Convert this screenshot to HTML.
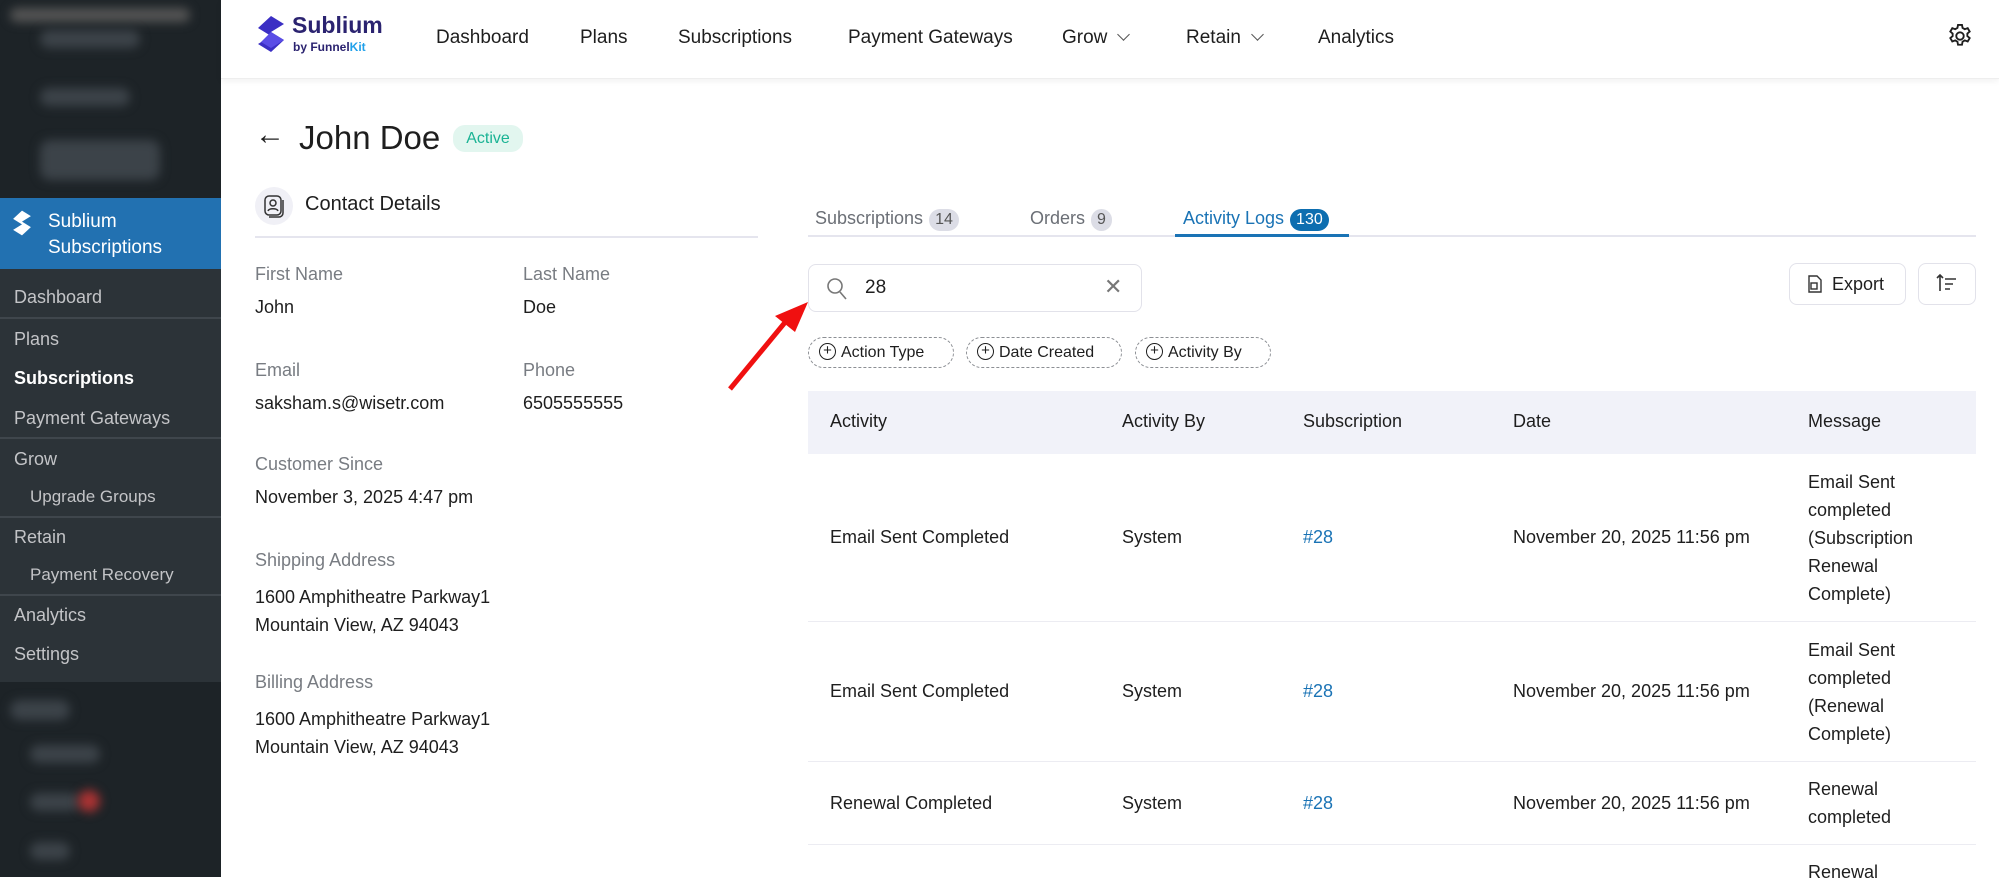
<!DOCTYPE html>
<html><head><meta charset="utf-8"><style>
*{margin:0;padding:0;box-sizing:border-box}
body{width:1999px;height:877px;overflow:hidden;background:#fff;font-family:"Liberation Sans",sans-serif;position:relative;color:#1e1e1e}
.a{position:absolute;white-space:nowrap}
#sb{position:absolute;left:0;top:0;width:221px;height:877px;background:#1d2327}
.blur{position:absolute;background:#3c4349;border-radius:10px;filter:blur(5px)}
.sm{position:absolute;left:14px;font-size:18px;color:#c3c4c7}
.sep{position:absolute;left:0;width:221px;height:2px;background:#3f464c}
.nav{position:absolute;top:27px;font-size:19px;color:#1e1e1e}
.chev{display:inline-block;width:9px;height:9px;border-right:1.5px solid #555;border-bottom:1.5px solid #555;transform:rotate(45deg);margin-left:12px;position:relative;top:-4px}
.lab{position:absolute;font-size:18px;color:#787c82}
.val{position:absolute;font-size:18px;color:#1e1e1e}
.th{position:absolute;top:411px;font-size:18px;color:#1e1e1e}
.td{position:absolute;font-size:18px;color:#1e1e1e}
.chip{position:absolute;top:337px;height:31px;border:1.5px dashed #8c8f94;border-radius:16px;font-size:16px;color:#1e1e1e;padding:6px 0 0 32px}
.chip:before{content:"+";position:absolute;left:10px;top:5px;width:15px;height:15px;border:1.5px solid #1e1e1e;border-radius:50%;font-size:15px;line-height:13px;text-align:center}
.badge{display:inline-block;border-radius:12px;padding:2px 6px;font-size:16px;margin-left:6px}
</style></head><body>
<div id="sb">
 <div class="blur" style="left:10px;top:8px;width:180px;height:14px;background:#555"></div>
 <div class="blur" style="left:40px;top:30px;width:100px;height:18px"></div>
 <div class="blur" style="left:40px;top:88px;width:90px;height:18px"></div>
 <div class="blur" style="left:40px;top:140px;width:120px;height:40px"></div>
 <div style="position:absolute;left:0;top:198px;width:221px;height:71px;background:#2271b1"></div>
 <svg class="a" style="left:12px;top:210px" width="20" height="26" viewBox="0 0 28 38"><path d="M14 1 L27 9 L14 17 L27 25 L14 37 L1 29 L14 21 L1 13 Z" fill="#fff"/></svg>
 <div class="a" style="left:48px;top:209px;color:#fff;font-size:19px;line-height:26px">Sublium<br>Subscriptions</div>
 <div style="position:absolute;left:0;top:269px;width:221px;height:413px;background:#2c3338"></div>
 <div class="sm" style="top:287px">Dashboard</div>
 <div class="sep" style="top:317px"></div>
 <div class="sm" style="top:329px">Plans</div>
 <div class="sm" style="top:368px;color:#fff;font-weight:bold">Subscriptions</div>
 <div class="sm" style="top:408px">Payment Gateways</div>
 <div class="sep" style="top:437px"></div>
 <div class="sm" style="top:449px">Grow</div>
 <div class="sm" style="top:487px;left:30px;font-size:17px">Upgrade Groups</div>
 <div class="sep" style="top:516px"></div>
 <div class="sm" style="top:527px">Retain</div>
 <div class="sm" style="top:565px;left:30px;font-size:17px">Payment Recovery</div>
 <div class="sep" style="top:594px"></div>
 <div class="sm" style="top:605px">Analytics</div>
 <div class="sm" style="top:644px">Settings</div>
 <div class="blur" style="left:10px;top:700px;width:60px;height:20px"></div>
 <div class="blur" style="left:30px;top:745px;width:70px;height:18px"></div>
 <div class="blur" style="left:30px;top:793px;width:50px;height:18px"></div>
 <div class="blur" style="left:78px;top:790px;width:22px;height:22px;background:#a33;border-radius:50%"></div>
 <div class="blur" style="left:30px;top:842px;width:40px;height:18px"></div>
</div>
<div style="position:absolute;left:221px;top:0;width:1778px;height:79px;background:#fff;box-shadow:0 2px 6px rgba(0,0,0,.06);border-bottom:1px solid #eee"></div>
<svg class="a" style="left:257px;top:15px" width="28" height="38" viewBox="0 0 28 38"><path d="M14 1 L27 9 L14 17 L27 25 L14 37 L1 29 L14 21 L1 13 Z" fill="#3b2fc4"/><path d="M14 17 L27 25 L14 33 L4 27Z" fill="#5a4de6"/></svg>
<div class="a" style="left:292px;top:12px;font-size:23px;font-weight:bold;color:#2b2370">Sublium</div>
<div class="a" style="left:293px;top:40px;font-size:12px;font-weight:bold;color:#2b2370">by Funnel<span style="color:#1fa0ea">Kit</span></div>
<div class="nav" style="left:436px">Dashboard</div>
<div class="nav" style="left:580px">Plans</div>
<div class="nav" style="left:678px">Subscriptions</div>
<div class="nav" style="left:848px">Payment Gateways</div>
<div class="nav" style="left:1062px">Grow<span class="chev"></span></div>
<div class="nav" style="left:1186px">Retain<span class="chev"></span></div>
<div class="nav" style="left:1318px">Analytics</div>
<svg class="a" style="left:1946px;top:22px" width="28" height="28" viewBox="0 0 24 24" fill="none" stroke="#1e1e1e" stroke-width="1.6"><circle cx="12" cy="12" r="3.2"/><path d="M10.3 2.5h3.4l.5 2.6 1.9 1.1 2.5-.9 1.7 2.9-2 1.7v2.2l2 1.7-1.7 2.9-2.5-.9-1.9 1.1-.5 2.6h-3.4l-.5-2.6-1.9-1.1-2.5.9-1.7-2.9 2-1.7v-2.2l-2-1.7 1.7-2.9 2.5.9 1.9-1.1z"/></svg>

<div class="a" style="left:255px;top:118px;font-size:30px;color:#1e1e1e">&#8592;</div>
<div class="a" style="left:299px;top:119px;font-size:33px;color:#1e1e1e">John Doe</div>
<div class="a" style="left:453px;top:125px;width:70px;height:27px;background:#e2f6ef;border-radius:12px;color:#1ab394;font-size:16px;text-align:center;line-height:27px">Active</div>
<div class="a" style="left:255px;top:187px;width:38px;height:38px;border-radius:50%;background:#f0f0f6"></div>
<svg class="a" style="left:263px;top:194px" width="22" height="24" viewBox="0 0 22 24" fill="none" stroke="#333" stroke-width="1.5"><rect x="2" y="2" width="16" height="19" rx="4"/><circle cx="10" cy="9" r="3"/><path d="M5 17c1-3 9-3 10 0"/><path d="M20 6v13a4 4 0 0 1-4 4H6"/></svg>
<div class="a" style="left:305px;top:193px;font-size:20px">Contact Details</div>
<div class="a" style="left:255px;top:236px;width:503px;height:2px;background:#e5e5ee"></div>
<div class="lab" style="left:255px;top:264px">First Name</div><div class="lab" style="left:523px;top:264px">Last Name</div>
<div class="val" style="left:255px;top:297px">John</div><div class="val" style="left:523px;top:297px">Doe</div>
<div class="lab" style="left:255px;top:360px">Email</div><div class="lab" style="left:523px;top:360px">Phone</div>
<div class="val" style="left:255px;top:393px">saksham.s@wisetr.com</div><div class="val" style="left:523px;top:393px">6505555555</div>
<div class="lab" style="left:255px;top:454px">Customer Since</div>
<div class="val" style="left:255px;top:487px">November 3, 2025 4:47 pm</div>
<div class="lab" style="left:255px;top:550px">Shipping Address</div>
<div class="val" style="left:255px;top:583px;line-height:28px">1600 Amphitheatre Parkway1<br>Mountain View, AZ 94043</div>
<div class="lab" style="left:255px;top:672px">Billing Address</div>
<div class="val" style="left:255px;top:705px;line-height:28px">1600 Amphitheatre Parkway1<br>Mountain View, AZ 94043</div>

<div class="a" style="left:808px;top:235px;width:1168px;height:2px;background:#e5e5ee"></div>
<div class="a" style="left:815px;top:208px;font-size:18px;color:#6b6f76">Subscriptions<span class="badge" style="background:#dcdde6;color:#555">14</span></div>
<div class="a" style="left:1030px;top:208px;font-size:18px;color:#6b6f76">Orders<span class="badge" style="background:#dcdde6;color:#555">9</span></div>
<div class="a" style="left:1183px;top:208px;font-size:18px;color:#1a73b5">Activity Logs<span class="badge" style="background:#0d6eb0;color:#fff">130</span></div>
<div class="a" style="left:1175px;top:234px;width:174px;height:3px;background:#1a73b5"></div>

<div class="a" style="left:808px;top:264px;width:334px;height:48px;border:1.5px solid #e2e2ea;border-radius:8px"></div>
<svg class="a" style="left:826px;top:277px" width="22" height="24" viewBox="0 0 22 24" fill="none" stroke="#777" stroke-width="1.6"><circle cx="9" cy="9" r="7"/><path d="M14 15l6 7"/></svg>
<div class="a" style="left:865px;top:277px;font-size:19px">28</div>
<div class="a" style="left:1104px;top:274px;font-size:22px;color:#777">&#10005;</div>
<div class="a" style="left:1789px;top:263px;width:117px;height:42px;border:1.5px solid #e2e2ea;border-radius:8px;font-size:18px;padding:10px 0 0 42px">Export</div>
<svg class="a" style="left:1806px;top:274px" width="18" height="20" viewBox="0 0 18 20" fill="none" stroke="#333" stroke-width="1.4"><path d="M3 2h8l4 4v12H3z"/><rect x="5" y="9" width="6" height="6"/></svg>
<div class="a" style="left:1918px;top:263px;width:58px;height:42px;border:1.5px solid #e2e2ea;border-radius:8px"></div>
<svg class="a" style="left:1936px;top:272px" width="22" height="22" viewBox="0 0 22 22" fill="none" stroke="#333" stroke-width="1.6"><path d="M4 3v16M1 6l3-3 3 3M9 7h11M9 12h8M9 17h5"/></svg>

<div class="chip" style="left:808px;width:146px">Action Type</div>
<div class="chip" style="left:966px;width:156px">Date Created</div>
<div class="chip" style="left:1135px;width:136px">Activity By</div>

<svg class="a" style="left:725px;top:298px" width="90" height="95" viewBox="0 0 90 95"><path d="M5 91 L62 22" stroke="#f01010" stroke-width="5"/><path d="M83 4 L50 18 L70 34 Z" fill="#f01010"/></svg>

<div class="a" style="left:808px;top:391px;width:1168px;height:63px;background:#f1f2f9"></div>
<div class="th" style="left:830px">Activity</div>
<div class="th" style="left:1122px">Activity By</div>
<div class="th" style="left:1303px">Subscription</div>
<div class="th" style="left:1513px">Date</div>
<div class="th" style="left:1808px">Message</div>

<div class="td" style="left:830px;top:527px">Email Sent Completed</div>
<div class="td" style="left:1122px;top:527px">System</div>
<div class="td" style="left:1303px;top:527px;color:#1a73b5">#28</div>
<div class="td" style="left:1513px;top:527px">November 20, 2025 11:56 pm</div>
<div class="td" style="left:1808px;top:468px;line-height:28px">Email Sent<br>completed<br>(Subscription<br>Renewal<br>Complete)</div>
<div class="a" style="left:808px;top:621px;width:1168px;height:1px;background:#ececf2"></div>
<div class="td" style="left:830px;top:681px">Email Sent Completed</div>
<div class="td" style="left:1122px;top:681px">System</div>
<div class="td" style="left:1303px;top:681px;color:#1a73b5">#28</div>
<div class="td" style="left:1513px;top:681px">November 20, 2025 11:56 pm</div>
<div class="td" style="left:1808px;top:636px;line-height:28px">Email Sent<br>completed<br>(Renewal<br>Complete)</div>
<div class="a" style="left:808px;top:761px;width:1168px;height:1px;background:#ececf2"></div>
<div class="td" style="left:830px;top:793px">Renewal Completed</div>
<div class="td" style="left:1122px;top:793px">System</div>
<div class="td" style="left:1303px;top:793px;color:#1a73b5">#28</div>
<div class="td" style="left:1513px;top:793px">November 20, 2025 11:56 pm</div>
<div class="td" style="left:1808px;top:775px;line-height:28px">Renewal<br>completed</div>
<div class="a" style="left:808px;top:844px;width:1168px;height:1px;background:#ececf2"></div>
<div class="td" style="left:1808px;top:862px">Renewal</div>
</body></html>
